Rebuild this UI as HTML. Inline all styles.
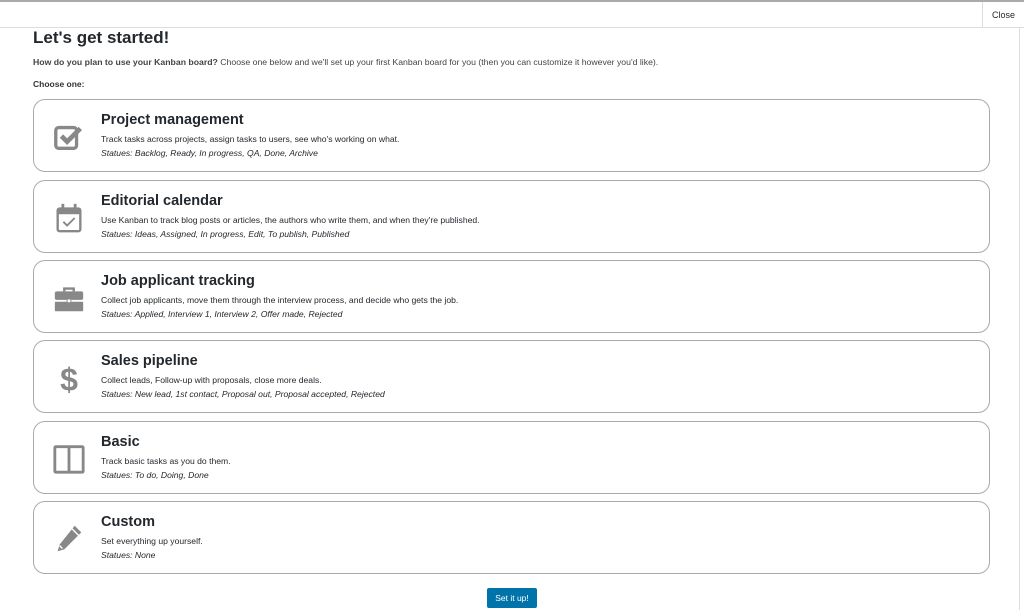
<!DOCTYPE html>
<html><head><meta charset="utf-8"><style>
*{box-sizing:border-box;margin:0;padding:0}
body{width:1024px;height:610px;background:#fff;font-family:"Liberation Sans",sans-serif;color:#23282d;position:relative;overflow:hidden}
.top{position:absolute;left:0;top:0;width:1024px;height:28px;border-top:2px solid #aaa;border-bottom:1px solid #ddd}
.close{position:absolute;right:0;top:0;width:42px;height:26px;border-left:1px solid #ddd;font-size:9px;line-height:26px;text-align:center}
.rline{position:absolute;left:1019px;top:28px;width:1px;height:582px;background:#ddd}
h1{position:absolute;left:33px;top:28px;font-size:17px;font-weight:bold}
.p1{position:absolute;left:33px;top:57px;font-size:8.7px;color:#444}
.p2{position:absolute;left:33px;top:79px;font-size:8.5px;font-weight:bold;color:#333}
.card{position:absolute;left:33px;width:957px;height:73px;border:1.5px solid #aaa;border-radius:12px}
.card svg{position:absolute;left:18px;top:20px;width:34px;height:34px}
.t{position:absolute;left:67px;top:12px;font-size:14.5px;font-weight:bold}
.d{position:absolute;left:67px;top:34px;font-size:8.6px}
.s{position:absolute;left:67px;top:48px;font-size:8.6px;font-style:italic}
.btn{position:absolute;left:487px;top:588px;width:50px;height:20px;background:#0073aa;border-radius:2px;color:#fff;font-size:8.5px;line-height:20px;text-align:center}
</style></head><body>
<div class="top"><div class="close">Close</div></div>
<div class="rline"></div>
<h1>Let's get started!</h1>
<div class="p1"><b>How do you plan to use your Kanban board?</b> Choose one below and we'll set up your first Kanban board for you (then you can customize it however you'd like).</div>
<div class="p2">Choose one:</div>

<div class="card" style="top:99px"><svg viewBox="0 0 36 36"><rect x="4" y="8" width="22" height="22" rx="3" fill="none" stroke="#888" stroke-width="3.5"/><path d="M10 17l6 6 14-14" fill="none" stroke="#888" stroke-width="5"/></svg>
<div class="t">Project management</div><div class="d">Track tasks across projects, assign tasks to users, see who's working on what.</div><div class="s">Statues: Backlog, Ready, In progress, QA, Done, Archive</div></div>

<div class="card" style="top:180px"><svg viewBox="0 0 36 36"><rect x="6" y="8" width="24" height="24" rx="2" fill="none" stroke="#888" stroke-width="2.5"/><rect x="6" y="8" width="24" height="6" fill="#888"/><rect x="10" y="3" width="3" height="7" fill="#888"/><rect x="23" y="3" width="3" height="7" fill="#888"/><path d="M12 22l4 4 8-8" fill="none" stroke="#888" stroke-width="2"/></svg>
<div class="t">Editorial calendar</div><div class="d">Use Kanban to track blog posts or articles, the authors who write them, and when they're published.</div><div class="s">Statues: Ideas, Assigned, In progress, Edit, To publish, Published</div></div>

<div class="card" style="top:260px"><svg viewBox="0 0 36 36"><path d="M13 11V8h10v3" fill="none" stroke="#888" stroke-width="2.5"/><rect x="3" y="11" width="30" height="9" rx="2" fill="#888"/><rect x="3" y="22" width="30" height="10" rx="1" fill="#888"/><rect x="16" y="19" width="4" height="4" fill="#fff" stroke="#888"/></svg>
<div class="t">Job applicant tracking</div><div class="d">Collect job applicants, move them through the interview process, and decide who gets the job.</div><div class="s">Statues: Applied, Interview 1, Interview 2, Offer made, Rejected</div></div>

<div class="card" style="top:340px"><svg viewBox="0 0 36 36"><text x="18" y="31" font-size="34" font-family="Liberation Sans" font-weight="bold" fill="#888" text-anchor="middle">$</text></svg>
<div class="t">Sales pipeline</div><div class="d">Collect leads, Follow-up with proposals, close more deals.</div><div class="s">Statues: New lead, 1st contact, Proposal out, Proposal accepted, Rejected</div></div>

<div class="card" style="top:421px"><svg viewBox="0 0 36 36"><rect x="3" y="5" width="30" height="27" rx="1" fill="none" stroke="#888" stroke-width="3"/><rect x="16.5" y="5" width="3" height="27" fill="#888"/></svg>
<div class="t">Basic</div><div class="d">Track basic tasks as you do them.</div><div class="s">Statues: To do, Doing, Done</div></div>

<div class="card" style="top:501px"><svg viewBox="0 0 36 36"><path d="M24 4l7 7-18 18-7 2 2-7z" fill="#888"/><path d="M21 7l7 7" stroke="#fff" stroke-width="1.5"/><path d="M8 25l3 3" stroke="#fff" stroke-width="1.5"/></svg>
<div class="t">Custom</div><div class="d">Set everything up yourself.</div><div class="s">Statues: None</div></div>

<div class="btn">Set it up!</div>
</body></html>
